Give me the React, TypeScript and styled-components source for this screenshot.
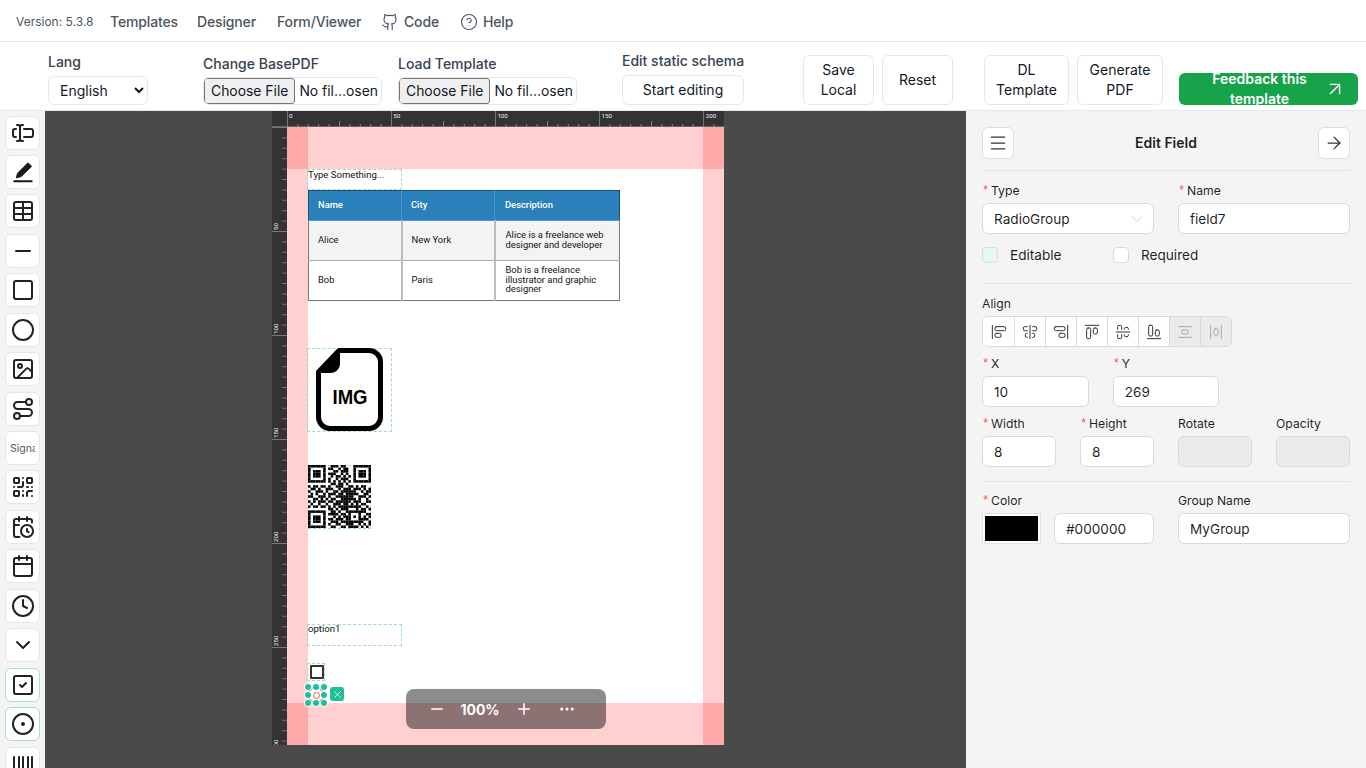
import React from "react";
import styled, { createGlobalStyle } from "styled-components";
import {
  TextCursorInput, Table as TableIcon, Minus, Square, Circle, Image as ImageIcon, Route, QrCode,
  CalendarClock, Calendar, Clock, ChevronDown, SquareCheck, CircleDot, Barcode, Github, CircleHelp,
  ArrowUpRight, Menu, ArrowRight, AlignStartVertical, AlignCenterVertical, AlignEndVertical,
  AlignStartHorizontal, AlignCenterHorizontal, AlignEndHorizontal, AlignVerticalSpaceAround,
  AlignHorizontalSpaceAround, Plus, Ellipsis, X,
} from "lucide-react";

const Global = createGlobalStyle`
  html, body { margin: 0; padding: 0; height: 100%; overflow: hidden; background: #fff; }
  body { font-family: Inter, "Liberation Sans", sans-serif; font-size: 14px; color: #111827; }
  * { box-sizing: border-box; }
`;

const Page = styled.div`
  height: 768px;
  display: flex;
  flex-direction: column;
  overflow: hidden;
`;

/* ---------- top navigation ---------- */
const TopNav = styled.nav`
  height: 42px;
  flex: none;
  display: flex;
  align-items: center;
  padding: 2px 0 0 16px;
  border-bottom: 1px solid #e5e7eb;
`;
const Version = styled.span`
  font-size: 12px;
  color: #4b5563;
  margin-right: 13px;
  width: 81px;
  white-space: nowrap;
`;
const NavLink = styled.a<{ $w: number }>`
  display: flex;
  align-items: center;
  gap: 5px;
  width: ${(p) => p.$w}px;
  font-weight: 500;
  color: #4b5563;
  white-space: nowrap;
  font-size: 14px;
  letter-spacing: -0.15px;
`;

/* ---------- tool bar ---------- */
const ToolBar = styled.div`
  height: 69px;
  flex: none;
  display: flex;
  align-items: flex-end;
  padding: 0 8px 5px 48px;
  border-bottom: 1px solid #e5e7eb;
`;
const Group = styled.div<{ $w: number; $mr: number }>`
  width: ${(p) => p.$w}px;
  margin-right: ${(p) => p.$mr}px;
  display: flex;
  flex-direction: column;
`;
const GroupLabel = styled.label<{ $mb?: number }>`
  font-size: 14px;
  font-weight: 500;
  line-height: 20px;
  color: #374151;
  margin-bottom: ${(p) => p.$mb ?? 4}px;
  white-space: nowrap;
`;
const LangSelect = styled.select`
  width: 100px;
  height: 29px;
  border: 1px solid #e5e7eb;
  border-radius: 6px;
  background: #fff;
  color: #111827;
  font: 14px Inter, sans-serif;
  padding: 0 4px 0 7px;
`;
const FileBox = styled.input`
  width: 100%;
  height: 28px;
  margin-top: 1px;
  border: 1px solid #e5e7eb;
  border-radius: 6px;
  background: #fff;
  color: #111827;
  font: 13.9px Inter, sans-serif;
  &::file-selector-button {
    height: 26px;
    font: 13.9px Inter, sans-serif;
    color: #111827;
    background: #efefef;
    border: 1px solid #767676;
    border-radius: 3px;
    padding: 0 6px;
    margin: 0 4px 0 0;
  }
`;
const ActionButton = styled.div<{ $w: number; $mr?: number; $h?: number }>`
  width: ${(p) => p.$w}px;
  height: ${(p) => p.$h ?? 50}px;
  margin-right: ${(p) => p.$mr ?? 0}px;
  padding: 0 12px;
  flex: none;
  border: 1px solid #e5e7eb;
  border-radius: 6px;
  background: #fff;
  display: flex;
  align-items: center;
  justify-content: center;
  text-align: center;
  font-size: 14px;
  line-height: 20px;
  color: #111827;
`;
const FeedbackButton = styled.div`
  width: 179px;
  height: 32px;
  flex: none;
  border-radius: 6px;
  background: #16a34a;
  color: #fff;
  font-weight: 600;
  font-size: 14px;
  line-height: 20px;
  display: flex;
  align-items: center;
  padding: 0 12px 0 16px;
  overflow: visible;
`;
const FeedbackText = styled.span`
  flex: 1;
  text-align: center;
`;

/* ---------- body ---------- */
const Main = styled.div`
  flex: 1;
  min-height: 0;
  display: flex;
`;
const Sidebar = styled.aside`
  width: 45px;
  flex: none;
  background: #f4f4f4;
  padding: 4.5px 0 0 5px;
  display: flex;
  flex-direction: column;
  gap: 5.45px;
  overflow: hidden;
`;
const ToolButton = styled.div<{ $active?: boolean }>`
  width: 35px;
  height: 34px;
  flex: none;
  background: #fff;
  border: 1px solid ${(p) => (p.$active ? "#a8e0cc" : "#e6e6e6")};
  border-radius: 6px;
  display: flex;
  align-items: center;
  justify-content: center;
  color: #222;
  overflow: hidden;
`;
const SignText = styled.span`
  font-size: 10.5px;
  color: #555;
  white-space: nowrap;
  width: 25px;
  overflow: hidden;
`;

const Canvas = styled.section`
  flex: 1;
  background: #4a4a4a;
  position: relative;
  padding-left: 227px;
  overflow: hidden;
`;
const Sheet = styled.div`
  position: relative;
  width: 452px;
  height: 634px;
  background: #333;
`;
const Paper = styled.div`
  position: absolute;
  left: 15px;
  top: 16px;
  width: 437px;
  height: 618px;
  background: #fff;
  font-family: Roboto, sans-serif;
  color: #111;
`;
const Margin = styled.div<{ $l: number; $t: number; $w: number; $h: number }>`
  position: absolute;
  left: ${(p) => p.$l}px;
  top: ${(p) => p.$t}px;
  width: ${(p) => p.$w}px;
  height: ${(p) => p.$h}px;
  background: rgba(255, 0, 0, 0.185);
`;
const Schema = styled.div<{ $l: number; $t: number; $w: number; $h: number }>`
  position: absolute;
  left: ${(p) => p.$l}px;
  top: ${(p) => p.$t}px;
  width: ${(p) => p.$w}px;
  height: ${(p) => p.$h}px;
  border: 1px dashed #9adcc8;
  font-size: 9.6px;
  line-height: 10px;
`;
const SchemaText = styled.span<{ $dy?: number }>`
  display: block;
  margin-top: ${(p) => p.$dy ?? 0}px;
  white-space: nowrap;
`;
const PdfTable = styled.table`
  border-collapse: collapse;
  table-layout: fixed;
  width: 311px;
  height: 110px;
  margin: -1px 0 0 -1px;
  font-size: 9.4px;
  line-height: 9.5px;
  color: #111;
`;
const HeadCell = styled.th`
  background: #2980ba;
  color: #fff;
  font-weight: 500;
  text-align: left;
  height: 30px;
  padding: 0 0 2px 9px;
  border: 1px solid #4f97c7;
  border-top: 1px solid #1b4f72;
  &:first-child { border-left: 1px solid #1b4f72; }
  &:last-child { border-right: 1px solid #1b4f72; padding-left: 10px; }
`;
const BodyCell = styled.td<{ $alt?: boolean }>`
  background: ${(p) => (p.$alt ? "#f3f3f3" : "#fff")};
  height: 40px;
  padding: 0 10px 2px 9px;
  border: 1px solid #aaa;
  border-left: 2px solid #bcbcbc;
  &:first-child { border-left: 1px solid #777; }
  &:last-child { border-right: 1px solid #777; padding-left: 10px; }
`;
const BodyRow = styled.tr`
  &:last-child td { border-bottom: 1px solid #777; }
`;
const CheckGlyph = styled.div`
  width: 14px;
  height: 14px;
  margin: 1px 0 0 2px;
  border: 2px solid #333;
  border-radius: 1px;
  background: #fff;
`;
const Handle = styled.div<{ $x: number; $y: number }>`
  position: absolute;
  left: ${(p) => p.$x - 3}px;
  top: ${(p) => p.$y - 3}px;
  width: 6px;
  height: 6px;
  border-radius: 50%;
  background: #1fbf9c;
  box-shadow: 0 0 0 1px #fff;
`;
const CenterRing = styled.div`
  position: absolute;
  left: 25.5px;
  top: 564.5px;
  width: 7px;
  height: 7px;
  border-radius: 50%;
  background: #fff;
  border: 1px solid #ef5350;
`;
const RadioRing = styled.div`
  position: absolute;
  left: 21px;
  top: 560px;
  width: 16px;
  height: 16px;
  border-radius: 50%;
  border: 1.5px solid #111;
`;
const DeleteBadge = styled.div`
  position: absolute;
  left: 43px;
  top: 560px;
  width: 14px;
  height: 14px;
  border-radius: 3px;
  background: #1fbf9c;
  box-shadow: 0 0 0 1px #fff;
  color: #fff;
  display: flex;
  align-items: center;
  justify-content: center;
`;
const ZoomBar = styled.div`
  position: absolute;
  left: 361px;
  top: 578px;
  width: 200px;
  height: 40px;
  border-radius: 8px;
  background: rgba(0, 0, 0, 0.45);
  color: #fff;
  display: flex;
  align-items: center;
  padding: 0 0 0 22px;
`;
const ZoomValue = styled.span`
  font-weight: 700;
  font-size: 14px;
  width: 54px;
  margin: 0 8px 0 7px;
  text-align: center;
`;
const ZoomGap = styled.div`
  width: 25px;
`;

/* ---------- right panel ---------- */
const Panel = styled.aside`
  width: 400px;
  flex: none;
  background: #f4f4f4;
  padding: 15px 16px 0;
  color: rgba(0, 0, 0, 0.88);
  font-size: 13.6px;
  overflow: hidden;
`;
const PanelHead = styled.div`
  height: 33px;
  display: flex;
  align-items: center;
  justify-content: space-between;
`;
const IconButton = styled.div<{ $nudge?: number }>`
  width: 32px;
  height: 32px;
  border: 1px solid #dedede;
  border-radius: 6px;
  background: #fff;
  display: flex;
  align-items: center;
  justify-content: center;
  color: #333;
  margin-top: ${(p) => p.$nudge ?? 0}px;
`;
const PanelTitle = styled.div`
  font-weight: 600;
  font-size: 14px;
  margin-top: -1px;
`;
const Divider = styled.div<{ $t: number; $b: number }>`
  height: 1px;
  background: #e3e3e3;
  margin: ${(p) => p.$t}px 0 ${(p) => p.$b}px;
`;
const Row = styled.div<{ $cols: number; $b?: number }>`
  display: grid;
  grid-template-columns: repeat(${(p) => p.$cols}, 1fr);
  column-gap: 24px;
  margin-bottom: ${(p) => p.$b ?? 0}px;
`;
const Label = styled.div<{ $req?: boolean }>`
  font-size: 12.2px;
  line-height: 20px;
  height: 20px;
  margin-bottom: 2px;
  white-space: nowrap;
  display: flex;
  &::before {
    content: ${(p) => (p.$req ? '"*"' : '""')};
    color: #ff4d4f;
    display: ${(p) => (p.$req ? "block" : "none")};
    width: 9px;
    font-size: 12px;
    font-family: "Liberation Mono", monospace;
  }
`;
const TextInput = styled.input`
  width: 100%;
  height: 31px;
  display: block;
  border: 1px solid #d9d9d9;
  border-radius: 6px;
  background: ${(p) => (p.disabled ? "#ebebeb" : "#fff")};
  padding: 0 11px;
  font: 13.6px Inter, sans-serif;
  color: rgba(0, 0, 0, 0.88);
  outline: none;
`;
const FakeSelect = styled.div`
  height: 31px;
  border: 1px solid #d9d9d9;
  border-radius: 6px;
  background: #fff;
  padding: 0 6px 0 11px;
  display: flex;
  align-items: center;
  justify-content: space-between;
  color: rgba(0, 0, 0, 0.88);
  svg { color: #bdbdbd; }
`;
const Checks = styled.div`
  display: flex;
  align-items: center;
  height: 16px;
  margin-top: 13px;
`;
const CheckItem = styled.div<{ $w: number }>`
  width: ${(p) => p.$w}px;
  display: flex;
  align-items: center;
  gap: 12px;
`;
const Box = styled.div<{ $tint?: boolean }>`
  width: 16px;
  height: 16px;
  border: 1px solid #d9d9d9;
  border-radius: 4px;
  background: ${(p) => (p.$tint ? "#e6f7f1" : "#fff")};
`;
const AlignGroup = styled.div`
  display: flex;
  width: fit-content;
  height: 31px;
  border: 1px solid #d9d9d9;
  border-radius: 6px;
  overflow: hidden;
  margin-bottom: 7px;
`;
const AlignButton = styled.div<{ $disabled?: boolean }>`
  width: 31px;
  display: flex;
  align-items: center;
  justify-content: center;
  background: ${(p) => (p.$disabled ? "#ebebeb" : "#fff")};
  color: ${(p) => (p.$disabled ? "#a3a3a3" : "#222")};
  border-left: 1px solid #d9d9d9;
  &:first-child { border-left: 0; }
`;
const ColorRow = styled.div`
  display: flex;
  gap: 13px;
`;
const Swatch = styled.div`
  width: 59px;
  height: 31px;
  flex: none;
  background: #000;
  border: 3px solid #fff;
  outline: 1px solid #e3e3e3;
  outline-offset: -1px;
`;

/* ---------- drawings ---------- */
const PenIcon = () => (
  <svg width="24" height="24" viewBox="0 0 24 24" fill="none">
    <path d="M17 2.8 20.6 6.3 10.2 16.6 5.4 17.8 6.5 13.2Z" fill="#1a1a1a" stroke="#1a1a1a" strokeWidth="1" strokeLinejoin="round" />
    <path d="M2.5 21.2h19" stroke="#1a1a1a" strokeWidth="2" />
  </svg>
);

const rulerText = { fill: "#eee", fontSize: 6.2, fontFamily: "Roboto, sans-serif" };

const TopRuler = () => {
  const ticks = Array.from({ length: 43 }, (_, i) => i);
  return (
    <svg width="452" height="16" style={{ position: "absolute", left: 0, top: 0 }}>
      <line x1="0" x2="452" y1="15.5" y2="15.5" stroke="#666" />
      {ticks.map((i) => {
        const x = 15.5 + i * 10.4;
        const len = i % 10 === 0 ? 16 : i % 5 === 0 ? 6 : 3;
        return <line key={i} x1={x} x2={x} y1={16 - len} y2={16} stroke={i % 10 === 0 ? "#777" : "#888"} />;
      })}
      {[0, 50, 100, 150, 200].map((v, i) => (
        <text key={v} x={17 + i * 104.2} y={7} {...rulerText}>{v}</text>
      ))}
    </svg>
  );
};

const LeftRuler = () => {
  const ticks = Array.from({ length: 60 }, (_, i) => i);
  return (
    <svg width="15" height="618" style={{ position: "absolute", left: 0, top: 16 }}>
      {ticks.map((i) => {
        const y = 0.5 + i * 10.4;
        const major = i % 10 === 0;
        return <line key={i} x1={major ? 0 : 10} x2={15} y1={y} y2={y} stroke={major ? "#777" : "#707070"} />;
      })}
      {[50, 100, 150, 200, 250, 300].map((v, i) => (
        <text key={v} x={6} y={103 + i * 104} transform={`rotate(-90 6 ${103 + i * 104})`} {...rulerText}>{v}</text>
      ))}
    </svg>
  );
};

const ImgFile = () => (
  <svg width="84" height="84" viewBox="0 0 84 84" style={{ display: "block", margin: "-1px" }}>
    <path d="M32 2.5H62a11.5 11.5 0 0 1 11.5 11.5V69a11.5 11.5 0 0 1-11.5 11.5H23A11.5 11.5 0 0 1 11.5 69V24Z" fill="#fff" stroke="#000" strokeWidth="5" strokeLinejoin="round" />
    <path d="M11.5 24 32 2.5V16a8 8 0 0 1-8 8Z" fill="#000" stroke="#000" strokeWidth="2" strokeLinejoin="round" />
    <text x="25.5" y="55.5" textLength="35" lengthAdjust="spacingAndGlyphs" fontFamily="'Liberation Sans', sans-serif" fontWeight="700" fontSize="20.5" fill="#000">IMG</text>
  </svg>
);

const QR_ROWS = [
  "1111111001110110001111111",
  "1000001011001011001000001",
  "1011101000110111001011101",
  "1011101011100101001011101",
  "1011101001011010101011101",
  "1000001010010111001000001",
  "1111111010101010101111111",
  "0000000001101101000000000",
  "1011011010011100110101100",
  "0110100111001011101110101",
  "1001110100110111111001011",
  "0101001011101101111100110",
  "1100111010011111110011101",
  "0011010101100111111010010",
  "1010111011011111101110011",
  "0100100100111011010101100",
  "1011011010101111111110010",
  "0000000011010111000101101",
  "1111111001101001111111100",
  "1000001011110110100010011",
  "1011101000101011101010101",
  "1011101011011101100011110",
  "1011101001110111111111001",
  "1000001010011001110010101",
  "1111111001100110111101010",
];
const QrDrawing = () => (
  <svg width="63" height="63" viewBox="0 0 25 25" style={{ display: "block", margin: "-1px" }}>
    {QR_ROWS.flatMap((r, y) =>
      r.split("").map((c, x) => (c === "1" ? <rect key={`${x}-${y}`} x={x} y={y} width="1.02" height="1.02" fill="#000" /> : null))
    )}
  </svg>
);

const toolIcons = [
  <TextCursorInput size={24} strokeWidth={2} />,
  <PenIcon />,
  <TableIcon size={24} />,
  <Minus size={24} />,
  <Square size={24} />,
  <Circle size={24} />,
  <ImageIcon size={24} />,
  <Route size={24} />,
  <SignText>Signature</SignText>,
  <QrCode size={24} />,
  <CalendarClock size={24} />,
  <Calendar size={24} />,
  <Clock size={24} />,
  <ChevronDown size={24} />,
  <SquareCheck size={24} />,
  <CircleDot size={24} />,
  <Barcode size={24} />,
];

const alignIcons = [
  AlignStartVertical, AlignCenterVertical, AlignEndVertical,
  AlignStartHorizontal, AlignCenterHorizontal, AlignEndHorizontal,
  AlignVerticalSpaceAround, AlignHorizontalSpaceAround,
];

const handlePts: [number, number][] = [
  [21, 560], [29, 560], [37, 560],
  [21, 568], [37, 568],
  [21, 576], [29, 576], [37, 576],
];

const Field = ({ label, req, value, disabled }: { label: string; req?: boolean; value?: string; disabled?: boolean }) => (
  <div>
    <Label $req={req}>{label}</Label>
    <TextInput readOnly value={value ?? ""} disabled={disabled} />
  </div>
);

export default function App() {
  return (
    <Page>
      <Global />
      <TopNav>
        <Version>Version: 5.3.8</Version>
        <NavLink $w={87}>Templates</NavLink>
        <NavLink $w={80}>Designer</NavLink>
        <NavLink $w={104}>Form/Viewer</NavLink>
        <NavLink $w={79}><Github size={18} strokeWidth={1.5} />Code</NavLink>
        <NavLink $w={70}><CircleHelp size={18} strokeWidth={1.5} />Help</NavLink>
      </TopNav>
      <ToolBar>
        <Group $w={100} $mr={55}>
          <GroupLabel>Lang</GroupLabel>
          <LangSelect defaultValue="en"><option value="en">English</option></LangSelect>
        </Group>
        <Group $w={179} $mr={16}>
          <GroupLabel $mb={2}>Change BasePDF</GroupLabel>
          <FileBox type="file" />
        </Group>
        <Group $w={179} $mr={45}>
          <GroupLabel $mb={2}>Load Template</GroupLabel>
          <FileBox type="file" />
        </Group>
        <Group $w={122} $mr={59}>
          <GroupLabel>Edit static schema</GroupLabel>
          <ActionButton $w={122} $h={30}>Start editing</ActionButton>
        </Group>
        <ActionButton $w={71} $mr={8}>Save Local</ActionButton>
        <ActionButton $w={71} $mr={31}>Reset</ActionButton>
        <ActionButton $w={85} $mr={8}>DL Template</ActionButton>
        <ActionButton $w={86} $mr={16}>Generate PDF</ActionButton>
        <FeedbackButton>
          <FeedbackText>Feedback this template</FeedbackText>
          <ArrowUpRight size={22} strokeWidth={1.5} />
        </FeedbackButton>
      </ToolBar>
      <Main>
        <Sidebar>
          {toolIcons.map((icon, i) => (
            <ToolButton key={i} $active={i === 14 || i === 15}>{icon}</ToolButton>
          ))}
        </Sidebar>
        <Canvas>
          <Sheet>
            <TopRuler />
            <LeftRuler />
            <Paper>
              <Margin $l={0} $t={0} $w={437} $h={42} />
              <Margin $l={0} $t={576} $w={437} $h={42} />
              <Margin $l={0} $t={0} $w={21} $h={618} />
              <Margin $l={416} $t={0} $w={21} $h={618} />
              <Schema $l={20} $t={42} $w={95} $h={21}><SchemaText>Type Something...</SchemaText></Schema>
              <Schema $l={21} $t={63} $w={312} $h={110}>
                <PdfTable>
                  <colgroup><col width="93" /><col width="93" /><col width="125" /></colgroup>
                  <thead>
                    <tr><HeadCell>Name</HeadCell><HeadCell>City</HeadCell><HeadCell>Description</HeadCell></tr>
                  </thead>
                  <tbody>
                    <BodyRow>
                      <BodyCell $alt>Alice</BodyCell><BodyCell $alt>New York</BodyCell>
                      <BodyCell $alt>Alice is a freelance web designer and developer</BodyCell>
                    </BodyRow>
                    <BodyRow>
                      <BodyCell>Bob</BodyCell><BodyCell>Paris</BodyCell>
                      <BodyCell>Bob is a freelance illustrator and graphic designer</BodyCell>
                    </BodyRow>
                  </tbody>
                </PdfTable>
              </Schema>
              <Schema $l={20} $t={221} $w={85} $h={84}><ImgFile /></Schema>
              <Schema $l={21} $t={338} $w={63} $h={64}><QrDrawing /></Schema>
              <Schema $l={20} $t={497} $w={95} $h={22}><SchemaText $dy={-1}>option1</SchemaText></Schema>
              <Schema $l={20} $t={536} $w={18} $h={18}><CheckGlyph /></Schema>
              <RadioRing />
              {handlePts.map(([x, y]) => <Handle key={`${x}-${y}`} $x={x} $y={y} />)}
              <CenterRing />
              <DeleteBadge><X size={11} strokeWidth={1.8} /></DeleteBadge>
            </Paper>
          </Sheet>
          <ZoomBar>
            <Minus size={18} strokeWidth={2} />
            <ZoomValue>100%</ZoomValue>
            <Plus size={18} strokeWidth={2} />
            <ZoomGap />
            <Ellipsis size={18} strokeWidth={2} />
          </ZoomBar>
        </Canvas>
        <Panel>
          <PanelHead>
            <IconButton><Menu size={20} strokeWidth={1.5} /></IconButton>
            <PanelTitle>Edit Field</PanelTitle>
            <IconButton $nudge={1}><ArrowRight size={20} strokeWidth={1.5} /></IconButton>
          </PanelHead>
          <Divider $t={11} $b={10} />
          <Row $cols={2}>
            <div>
              <Label $req>Type</Label>
              <FakeSelect>RadioGroup<ChevronDown size={20} strokeWidth={0.9} /></FakeSelect>
            </div>
            <Field label="Name" req value="field7" />
          </Row>
          <Checks>
            <CheckItem $w={131}><Box $tint />Editable</CheckItem>
            <CheckItem $w={120}><Box />Required</CheckItem>
          </Checks>
          <Divider $t={20} $b={10} />
          <Label>Align</Label>
          <AlignGroup>
            {alignIcons.map((Icon, i) => (
              <AlignButton key={i} $disabled={i > 5}><Icon size={16} strokeWidth={1.4} /></AlignButton>
            ))}
          </AlignGroup>
          <Row $cols={3} $b={7}>
            <Field label="X" req value="10" />
            <Field label="Y" req value="269" />
          </Row>
          <Row $cols={4}>
            <Field label="Width" req value="8" />
            <Field label="Height" req value="8" />
            <Field label="Rotate" disabled />
            <Field label="Opacity" disabled />
          </Row>
          <Divider $t={14} $b={9} />
          <Row $cols={2}>
            <div>
              <Label $req>Color</Label>
              <ColorRow><Swatch /><TextInput readOnly value="#000000" /></ColorRow>
            </div>
            <Field label="Group Name" value="MyGroup" />
          </Row>
        </Panel>
      </Main>
    </Page>
  );
}
